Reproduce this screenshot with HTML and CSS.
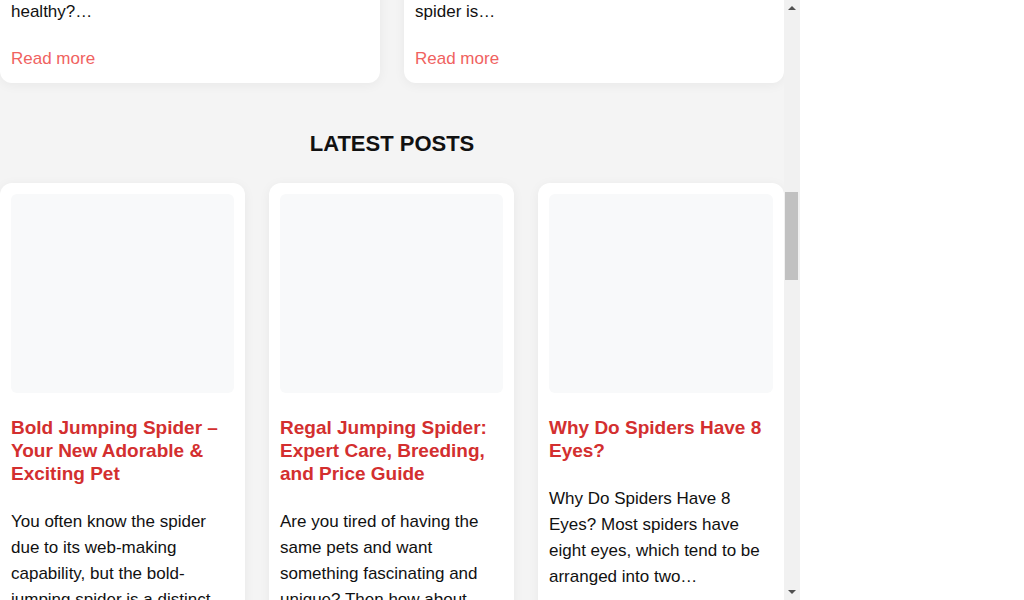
FILE: index.html
```html
<!DOCTYPE html>
<html lang="en">
<head>
<meta charset="utf-8">
<title>Jumping Spiders</title>
<link rel="stylesheet" href="styles.css">
</head>
<body>
<div class="frame">
  <div class="viewport" id="viewport">
    <div class="page">
      <header class="intro">
        <h1 class="site-title">Spider Keeper</h1>
        <p class="site-tag">Everything you need to know about keeping jumping spiders as pets.</p>
      </header>

      <section class="section">
        <h2 class="section-title">FEATURED POSTS</h2>
        <div class="grid two">
          <article class="card">
            <div class="thumb"></div>
            <h3 class="card-title">How To Care For A Jumping Spider</h3>
            <p class="excerpt">Jumping spiders are easy pets to keep, but what do they need to eat, where should they live and how do you make sure that it stays healthy?…</p>
            <a class="more" href="#">Read more</a>
          </article>
          <article class="card">
            <div class="thumb"></div>
            <h3 class="card-title">Are Jumping Spiders Venomous?</h3>
            <p class="excerpt">Most people are afraid of spiders, but is a jumping spider really dangerous to people? Read this before you decide whether this spider is…</p>
            <a class="more" href="#">Read more</a>
          </article>
        </div>
      </section>

      <section class="section" id="latest">
        <h2 class="section-title">LATEST POSTS</h2>
        <div class="grid three">
          <article class="card">
            <div class="thumb"></div>
            <h3 class="card-title">Bold Jumping Spider – Your New Adorable &amp; Exciting Pet</h3>
            <p class="excerpt">You often know the spider due to its web-making capability, but the bold-jumping spider is a distinct species that hunts without a web…</p>
            <a class="more" href="#">Read more</a>
          </article>
          <article class="card">
            <div class="thumb"></div>
            <h3 class="card-title">Regal Jumping Spider: Expert Care, Breeding, and Price Guide</h3>
            <p class="excerpt">Are you tired of having the same pets and want something fascinating and unique? Then how about keeping a regal jumping spider…</p>
            <a class="more" href="#">Read more</a>
          </article>
          <article class="card">
            <div class="thumb"></div>
            <h3 class="card-title">Why Do Spiders Have 8 Eyes?</h3>
            <p class="excerpt">Why Do Spiders Have 8 Eyes? Most spiders have eight eyes, which tend to be arranged into two…</p>
            <a class="more" href="#">Read more</a>
          </article>
          <article class="card">
            <div class="thumb"></div>
            <h3 class="card-title">What Do Jumping Spiders Eat?</h3>
            <p class="excerpt">Feeding your jumping spider the right prey is key to keeping it active, healthy and growing through each molt…</p>
            <a class="more" href="#">Read more</a>
          </article>
          <article class="card">
            <div class="thumb"></div>
            <h3 class="card-title">Best Enclosure Setup For Jumping Spiders</h3>
            <p class="excerpt">A good enclosure gives your spider room to climb, hide and build a sleeping hammock near the top…</p>
            <a class="more" href="#">Read more</a>
          </article>
          <article class="card">
            <div class="thumb"></div>
            <h3 class="card-title">How Long Do Jumping Spiders Live?</h3>
            <p class="excerpt">The lifespan of a jumping spider depends on its species, its sex and the care that it receives…</p>
            <a class="more" href="#">Read more</a>
          </article>
        </div>
      </section>

      <footer class="footer">
        <p>© Spider Keeper. All rights reserved.</p>
      </footer>
    </div>
  </div>
  <div class="scrollbar" aria-hidden="true">
    <div class="sb-button"><span class="arrow up"></span></div>
    <div class="sb-track"><div class="sb-thumb"></div></div>
    <div class="sb-button"><span class="arrow down"></span></div>
  </div>
</div>
<script src="script.js"></script>
</body>
</html>
```

FILE: styles.css
```css
html, body {
  margin: 0;
  padding: 0;
  background: #ffffff;
}

body {
  font-family: "Liberation Sans", Arial, sans-serif;
  color: #111111;
}

.frame {
  display: flex;
  width: 800px;
  height: 600px;
}

.viewport {
  width: 784px;
  height: 600px;
  overflow: hidden;
  background: #f4f4f4;
}

.page {
  display: flex;
  flex-direction: column;
}

.intro {
  padding: 80px 20px 40px;
  text-align: center;
}

.site-title {
  margin: 0 0 16px;
  font-size: 34px;
  color: #d32f2f;
}

.site-tag {
  margin: 0;
  font-size: 17px;
  line-height: 26px;
}

.section {
  display: flex;
  flex-direction: column;
  padding-top: 48px;
}

.section-title {
  margin: 0 0 26px;
  font-size: 22px;
  line-height: 26px;
  font-weight: bold;
  text-align: center;
  color: #111111;
}

.grid {
  display: grid;
  gap: 24px;
}

.grid.two {
  grid-template-columns: 380px 380px;
}

.grid.three {
  grid-template-columns: 245px 245px 246px;
}

.card {
  display: flex;
  flex-direction: column;
  background: #ffffff;
  border-radius: 12px;
  padding: 11px;
  box-shadow: 0 2px 12px rgba(0, 0, 0, 0.05);
}

.thumb {
  height: 199px;
  background: #f8f9fa;
  border-radius: 6px;
}

.card-title {
  margin: 23px 0 0;
  font-size: 19px;
  line-height: 23px;
  font-weight: bold;
  color: #d32f2f;
}

.excerpt {
  margin: 24px 0 0;
  font-size: 17px;
  line-height: 26px;
  color: #111111;
}

.more {
  margin-top: 21px;
  font-size: 17px;
  line-height: 26px;
  color: #f0625f;
  text-decoration: none;
}

.footer {
  margin-top: 60px;
  padding: 40px 20px 600px;
  text-align: center;
  font-size: 15px;
  color: #555555;
}

/* Classic scrollbar of the framed page */
.scrollbar {
  display: flex;
  flex-direction: column;
  width: 16px;
  height: 600px;
  background: #f1f1f1;
}

.sb-button {
  display: flex;
  align-items: center;
  justify-content: center;
  height: 16px;
  flex: none;
}

.arrow {
  width: 0;
  height: 0;
  border-left: 4px solid transparent;
  border-right: 4px solid transparent;
}

.arrow.up {
  border-bottom: 4px solid #505050;
}

.arrow.down {
  border-top: 4px solid #505050;
}

.sb-track {
  position: relative;
  flex: 1;
}

.sb-thumb {
  position: absolute;
  top: 176px;
  left: 1px;
  width: 13px;
  height: 88px;
  background: #c1c1c1;
}
```

FILE: script.js
```js
var viewport = document.getElementById('viewport');
var latest = document.getElementById('latest');
var heading = latest.querySelector('.section-title');
viewport.scrollTop = heading.offsetTop - viewport.offsetTop - 131;
```
